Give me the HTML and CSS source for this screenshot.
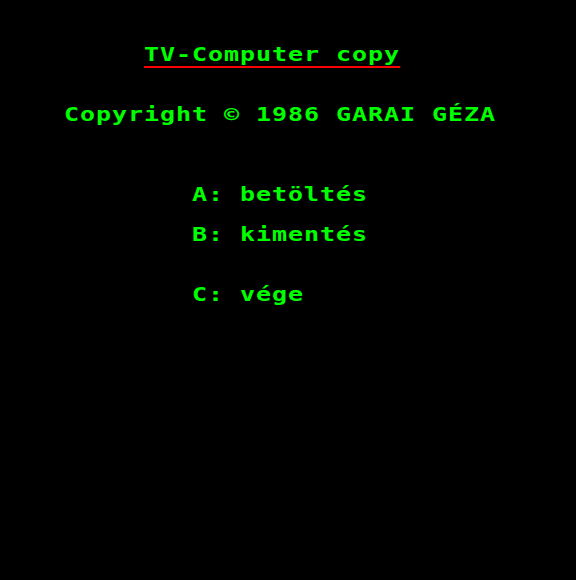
FILE: index.html
```html
<!DOCTYPE html>
<html lang="hu">
<head>
<meta charset="utf-8">
<title>TV-Computer copy</title>
<link rel="stylesheet" href="styles.css">
</head>
<body>
<main class="screen">
  <div class="line title">TV-Computer copy</div>
  <div class="line copyright">Copyright © 1986 GARAI GÉZA</div>
  <div class="menu">
    <div class="line item">A: betöltés</div>
    <div class="line item">B: kimentés</div>
    <div class="line item item-exit">C: vége</div>
  </div>
</main>
</body>
</html>
```
FILE: styles.css
```css
html, body {
  margin: 0;
  padding: 0;
  background: #000;
}
.screen {
  width: 576px;
  height: 580px;
  background: #000;
  color: #00ff00;
  font-family: "DejaVu Sans Mono", "Liberation Mono", monospace;
  font-weight: bold;
  font-size: 20px;
  line-height: 20px;
  padding-top: 44px;
  box-sizing: border-box;
  overflow: hidden;
}
.line {
  width: fit-content;
  white-space: pre;
  letter-spacing: 0.76px;
  transform: scaleX(1.25);
  transform-origin: 0 0;
}
.title {
  margin-left: 144px;
  padding-bottom: 2px;
  border-bottom: 2px solid #ff0000;
}
.copyright {
  margin-left: 64px;
  margin-top: 36px;
}
.menu {
  margin-top: 60px;
  display: flex;
  flex-direction: column;
  gap: 20px;
}
.item {
  margin-left: 192px;
}
.item-exit {
  margin-top: 20px;
}
```
